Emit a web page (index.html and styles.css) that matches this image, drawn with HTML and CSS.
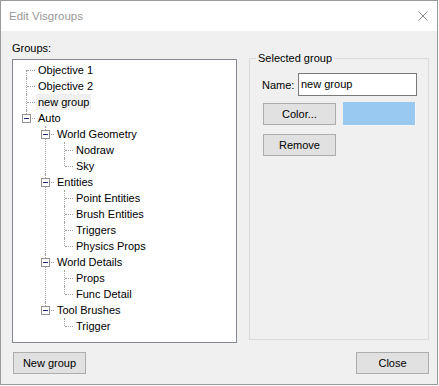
FILE: index.html
```html
<!DOCTYPE html>
<html lang="en">

<head>
    <meta charset="UTF-8">
    <title>Edit Visgroups</title>
    <link rel="stylesheet" href="styles.css">
</head>

<body>
    <div class="window">
        <!-- Title bar -->
        <div class="titlebar">
            <span class="title">Edit Visgroups</span>
            <svg class="close-x" width="10" height="10" viewBox="0 0 10 10">
                <path d="M0.5 0.5 L9.5 9.5 M9.5 0.5 L0.5 9.5" stroke="#8a8a8a" stroke-width="1" fill="none"/>
            </svg>
        </div>

        <div class="client">
            <div class="main">
                <!-- Groups tree -->
                <div class="groups">
                    <div class="label">Groups:</div>
                    <div class="tree-box">
                        <ul class="tree">
                            <li><span class="node">Objective 1</span></li>
                            <li><span class="node">Objective 2</span></li>
                            <li><span class="node selected">new group</span></li>
                            <li><span class="toggle"></span><span class="node">Auto</span>
                                <ul>
                                    <li><span class="toggle"></span><span class="node">World Geometry</span>
                                        <ul>
                                            <li><span class="node">Nodraw</span></li>
                                            <li><span class="node">Sky</span></li>
                                        </ul>
                                    </li>
                                    <li><span class="toggle"></span><span class="node">Entities</span>
                                        <ul>
                                            <li><span class="node">Point Entities</span></li>
                                            <li><span class="node">Brush Entities</span></li>
                                            <li><span class="node">Triggers</span></li>
                                            <li><span class="node">Physics Props</span></li>
                                        </ul>
                                    </li>
                                    <li><span class="toggle"></span><span class="node">World Details</span>
                                        <ul>
                                            <li><span class="node">Props</span></li>
                                            <li><span class="node">Func Detail</span></li>
                                        </ul>
                                    </li>
                                    <li><span class="toggle"></span><span class="node">Tool Brushes</span>
                                        <ul>
                                            <li><span class="node">Trigger</span></li>
                                        </ul>
                                    </li>
                                </ul>
                            </li>
                        </ul>
                    </div>
                </div>

                <!-- Selected group -->
                <fieldset class="selected-group">
                    <legend>Selected group</legend>
                    <div class="name-row">
                        <label for="group-name">Name:</label>
                        <input id="group-name" type="text" value="new group">
                    </div>
                    <div class="color-row">
                        <button class="btn">Color...</button>
                        <div class="swatch"></div>
                    </div>
                    <button class="btn remove">Remove</button>
                </fieldset>
            </div>

            <!-- Footer buttons -->
            <div class="footer">
                <button class="btn new-group">New group</button>
                <button class="btn">Close</button>
            </div>
        </div>
    </div>
</body>

</html>
```

FILE: styles.css
```css
/* General */
* {
    margin: 0;
    padding: 0;
    box-sizing: border-box;
}

body {
    font-family: 'Liberation Sans', Arial, sans-serif;
    font-size: 11px;
    color: #000;
    background: #ffffff;
}

button,
input {
    font-family: inherit;
    font-size: 11px;
    color: #000;
}

/* Window */
.window {
    width: 438px;
    height: 385px;
    border: 1px solid #9a9a9a;
    display: flex;
    flex-direction: column;
}

.titlebar {
    height: 30px;
    background: #ffffff;
    display: flex;
    align-items: center;
    justify-content: space-between;
    padding: 0 9px 0 8px;
}

.titlebar .title {
    font-size: 11.5px;
    color: #999999;
}

.client {
    flex: 1;
    background: #f0f0f0;
    padding: 11px 8px 0 11px;
}

.main {
    display: flex;
    gap: 12px;
}

/* Groups tree */
.groups {
    width: 225px;
}

.label {
    height: 13px;
    line-height: 13px;
    margin-bottom: 4px;
}

.tree-box {
    height: 284px;
    background: #ffffff;
    border: 1px solid #828790;
    padding-top: 2px;
}

.tree,
.tree ul {
    list-style: none;
}

.tree ul {
    margin-left: -4px;
}

.tree li {
    position: relative;
    padding-left: 23px;
}

.tree li::before {
    content: '';
    position: absolute;
    left: 13px;
    top: 0;
    bottom: 0;
    border-left: 1px dotted #a0a0a0;
}

.tree li:last-child::before {
    bottom: auto;
    height: 8px;
}

.tree > li:first-child::before {
    top: 8px;
}

.tree li::after {
    content: '';
    position: absolute;
    left: 14px;
    top: 8px;
    width: 8px;
    border-top: 1px dotted #a0a0a0;
}

.tree .node {
    display: inline-block;
    height: 16px;
    line-height: 16px;
    padding: 0 2px;
    white-space: nowrap;
}

.tree .node.selected {
    background: #f0f0f0;
}

.tree .toggle {
    position: absolute;
    left: 9px;
    top: 4px;
    width: 9px;
    height: 9px;
    border: 1px solid #919191;
    background: #ffffff;
    z-index: 1;
}

.tree .toggle::before {
    content: '';
    position: absolute;
    left: 1px;
    top: 3px;
    width: 5px;
    height: 1px;
    background: #1a2a70;
}

/* Selected group */
.selected-group {
    width: 180px;
    height: 288px;
    margin-top: 10px;
    border: 1px solid #dcdcdc;
    padding: 8px 0 0 12px;
}

.selected-group legend {
    margin-left: -6px;
    padding: 0 2px;
    line-height: 13px;
}

.name-row {
    display: flex;
    align-items: center;
}

.name-row label {
    width: 36px;
}

.name-row input {
    width: 119px;
    height: 23px;
    border: 1px solid #7a7a7a;
    background: #ffffff;
    padding: 0 0 2px 2px;
    outline: none;
}

.color-row {
    display: flex;
    align-items: center;
    gap: 7px;
    margin-top: 6px;
    margin-left: 1px;
}

.swatch {
    width: 73px;
    height: 24px;
    background: #99c9f1;
    border-right: 1px solid #f4f8fc;
    border-bottom: 1px solid #f4f8fc;
}

.btn {
    width: 73px;
    height: 22px;
    background: #e1e1e1;
    border: 1px solid #adadad;
    cursor: pointer;
}

.remove {
    margin: 8px 0 0 1px;
}

/* Footer */
.footer {
    display: flex;
    justify-content: space-between;
    margin-top: 9px;
}

.new-group {
    margin-left: 1px;
}
```
